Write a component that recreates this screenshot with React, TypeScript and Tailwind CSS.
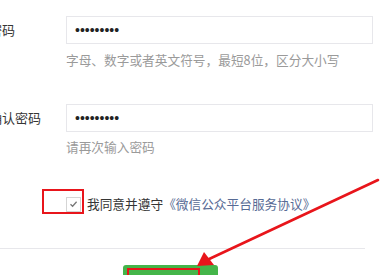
import React from 'react';

const Dots = () => (
    <div className="flex h-[28px] w-[307px] items-center border border-[#e7e7eb] bg-white pl-[8px] font-['Liberation_Sans'] text-[14px] text-[#222]">
        •••••••••
    </div>
);

const App = () => {
    return (
        <div className="relative h-[275px] w-[392px] overflow-hidden bg-white font-['Noto_Sans_CJK_SC',sans-serif] text-[12.7px] text-[#353535]">
            <div className="flex items-center pt-[16px]">
                <div className="-ml-[11px] w-[77px] shrink-0 text-[13px]">密码</div>
                <Dots/>
            </div>
            <div className="ml-[66px] mt-[6px] leading-[20px] text-[#9a9a9a]">
                字母、数字或者英文符号，最短8位，区分大小写
            </div>

            <div className="mt-[34px] flex items-center">
                <div className="-ml-[11px] w-[77px] shrink-0 text-[13px]">确认密码</div>
                <Dots/>
            </div>
            <div className="ml-[66px] mt-[5px] leading-[20px] text-[#9a9a9a]">请再次输入密码</div>

            <div className="ml-[66px] mt-[37px] flex h-[20px] items-center gap-[6px]">
                <span className="flex h-[15px] w-[15px] items-center justify-center border border-[#d5d5d5] bg-white">
                    <svg width="9" height="8" viewBox="0 0 9 8" fill="none">
                        <path d="M1.5 4.2 3.6 6.2 7.6 1.8" stroke="#777" strokeWidth="1.3"/>
                    </svg>
                </span>
                <span>
                    我同意并遵守<span className="text-[#576b95]">《微信公众平台服务协议》</span>
                </span>
            </div>

            <div className="mt-[34px] h-px w-[365px] bg-[#e7e7eb]"/>

            <div className="relative ml-[123px] mt-[16px] h-[30px] w-[95px] rounded-[3px] bg-[#44b549]">
                <div className="absolute left-[4px] top-[3px] h-[30px] w-[73px] border-2 border-[#e8151b]"/>
            </div>

            {/* annotations */}
            <div className="absolute left-[42px] top-[189px] h-[25px] w-[42px] border-2 border-[#e8151b]"/>
            <svg className="absolute left-0 top-0" width="392" height="275" viewBox="0 0 392 275">
                <line x1="378" y1="180" x2="207" y2="260" stroke="#e8151b" strokeWidth="2.6" strokeLinecap="round"/>
                <polygon points="197,266 204,252 214,265" fill="#e8151b"/>
            </svg>
        </div>
    );
};

export default App;
